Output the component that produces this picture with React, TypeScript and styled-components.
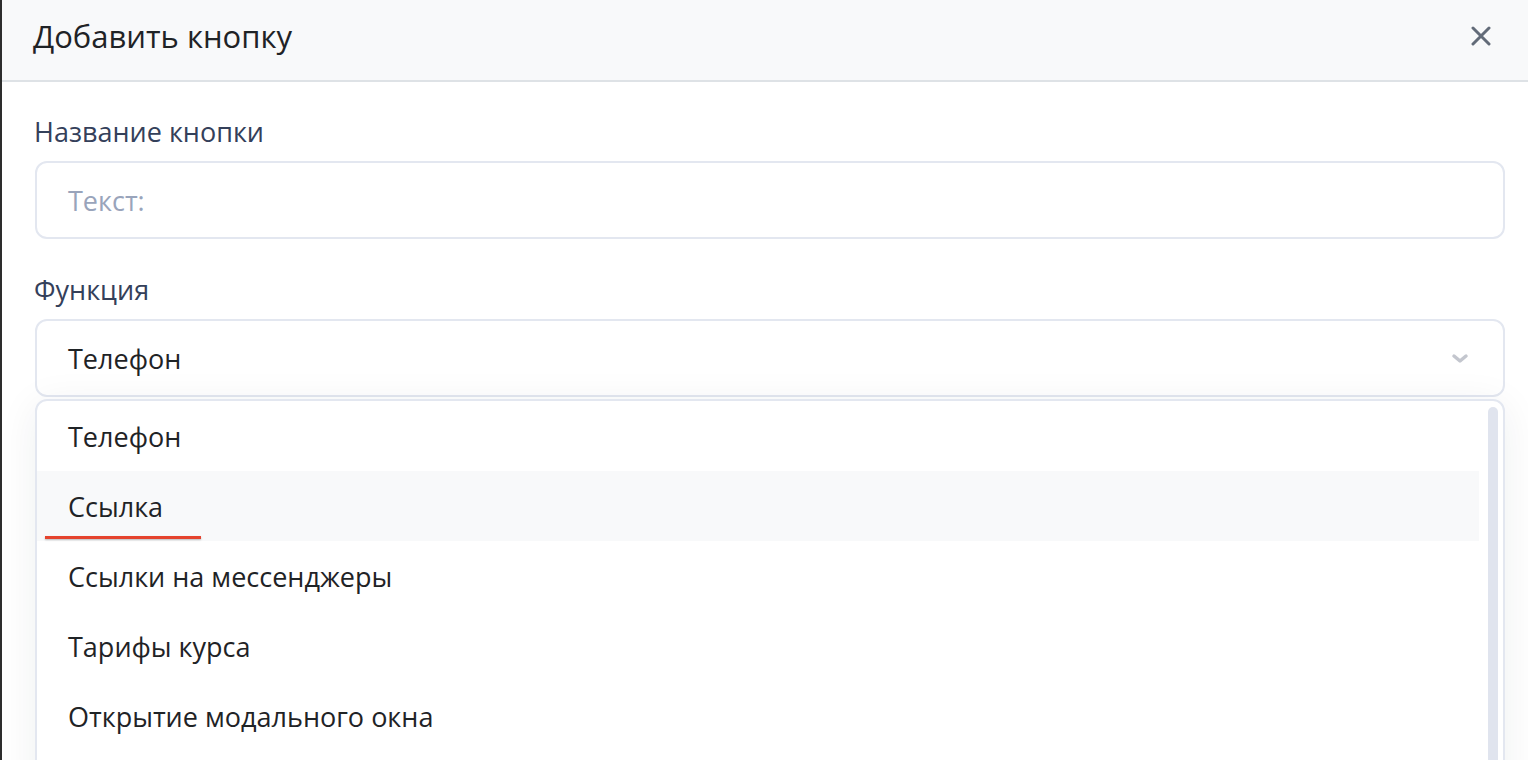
import React from "react";
import styled, { createGlobalStyle } from "styled-components";

const Global = createGlobalStyle`
  html, body { margin: 0; padding: 0; }
  body { font-family: "Open Sans", "Noto Sans", sans-serif; background: #2d2d2d; overflow: hidden; }
  * { box-sizing: border-box; }
`;

const Page = styled.div`
  display: flex;
  height: 760px;
  padding-left: 2px;
  background: #2d2d2d;
`;

const Modal = styled.div`
  flex: 1;
  display: flex;
  flex-direction: column;
  background: #ffffff;
  overflow: hidden;
`;

const Header = styled.div`
  height: 82px;
  flex: none;
  display: flex;
  align-items: center;
  justify-content: space-between;
  padding: 0 36px 8px 31px;
  background: #f8f9fa;
  border-bottom: 2px solid #dee2e6;
`;

const Title = styled.h2`
  margin: 0;
  font-size: 31px;
  font-weight: 400;
  color: #1f2326;
`;

const CloseButton = styled.button`
  width: 22px;
  height: 22px;
  padding: 0;
  border: none;
  background: none;
  display: flex;
  align-items: center;
  justify-content: center;
  color: #626b78;
  cursor: pointer;
`;

const Body = styled.div`
  display: flex;
  flex-direction: column;
  padding: 34px 23px 0 33px;
`;

const Field = styled.div`
  display: flex;
  flex-direction: column;
  gap: 13px;
  margin-bottom: 35px;
`;

const Label = styled.label`
  margin-left: -1px;
  font-size: 27px;
  line-height: 32px;
  color: #34405a;
`;

const Input = styled.div<{ $placeholder?: boolean }>`
  height: 78px;
  flex: none;
  display: flex;
  align-items: center;
  justify-content: space-between;
  padding: 0 34px 0 31px;
  border: 2px solid #e3e7f0;
  border-radius: 12px;
  font-size: 27px;
  color: ${(p) => (p.$placeholder ? "#99a4bb" : "#1f2326")};
`;

const SelectWrap = styled.div`
  display: flex;
  flex-direction: column;
  gap: 2px;
`;

const Menu = styled.div`
  position: relative;
  height: 400px;
  flex: none;
  border: 2px solid #e3e7f0;
  border-radius: 12px;
  background: #fff;
  box-shadow: 0 6px 40px rgba(30, 40, 60, 0.07);
  padding: 0 24px 0 0;
`;

const Item = styled.div<{ $active?: boolean }>`
  position: relative;
  height: 70px;
  display: flex;
  align-items: center;
  padding-left: 31px;
  font-size: 27px;
  color: #1f2326;
  background: ${(p) => (p.$active ? "#f8f9fa" : "transparent")};
`;

const Underline = styled.span`
  position: absolute;
  left: 8px;
  bottom: 2px;
  width: 156px;
  height: 3px;
  background: #e5432d;
  box-shadow: 0 1px 2px rgba(0, 0, 0, 0.25);
`;

const Scrollbar = styled.div`
  position: absolute;
  top: 6px;
  right: 5px;
  width: 10px;
  height: 500px;
  border-radius: 5px;
  background: #e0e4ee;
`;

const options = [
  "Телефон",
  "Ссылка",
  "Ссылки на мессенджеры",
  "Тарифы курса",
  "Открытие модального окна",
];

export default function App() {
  return (
    <>
      <Global />
      <Page>
        <Modal>
          <Header>
            <Title>Добавить кнопку</Title>
            <CloseButton aria-label="Закрыть">
              <svg width="20" height="20" viewBox="0 0 20 20">
                <path d="M2 2 L18 18 M18 2 L2 18" stroke="currentColor" strokeWidth="3" strokeLinecap="round" />
              </svg>
            </CloseButton>
          </Header>
          <Body>
            <Field>
              <Label>Название кнопки</Label>
              <Input $placeholder>Текст:</Input>
            </Field>
            <Field>
              <Label>Функция</Label>
              <SelectWrap>
                <Input>
                  Телефон
                  <svg width="18" height="11" viewBox="0 0 18 11">
                    <path d="M3 3 L9 8 L15 3" stroke="#c3c6ce" strokeWidth="3.5" fill="none" strokeLinecap="round" strokeLinejoin="round" />
                  </svg>
                </Input>
                <Menu>
                  {options.map((o) => (
                    <Item key={o} $active={o === "Ссылка"}>
                      {o}
                      {o === "Ссылка" && <Underline />}
                    </Item>
                  ))}
                  <Scrollbar />
                </Menu>
              </SelectWrap>
            </Field>
          </Body>
        </Modal>
      </Page>
    </>
  );
}
